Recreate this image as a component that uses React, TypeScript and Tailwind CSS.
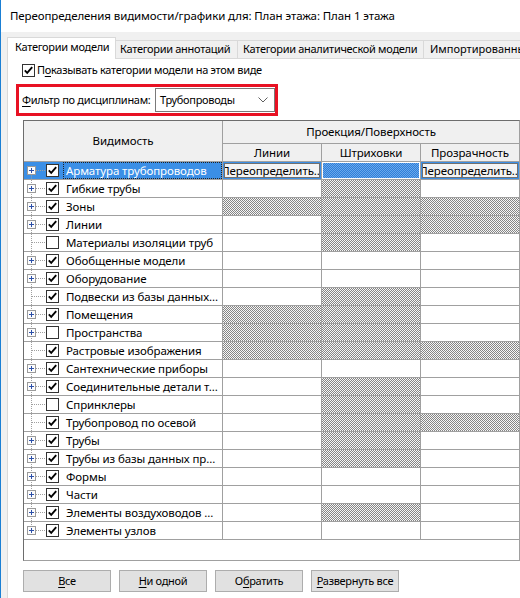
import React from "react"

type Cell = "w" | "h" | "btn" | "sel"

type Row = {
  name: string
  plus: boolean
  checked: boolean
  l: Cell
  s: Cell
  t: Cell
}

const rows: Row[] = [
  { name: "Арматура трубопроводов", plus: true, checked: true, l: "btn", s: "sel", t: "btn" },
  { name: "Гибкие трубы", plus: true, checked: true, l: "w", s: "h", t: "w" },
  { name: "Зоны", plus: true, checked: true, l: "h", s: "h", t: "h" },
  { name: "Линии", plus: true, checked: true, l: "w", s: "h", t: "h" },
  { name: "Материалы изоляции труб", plus: false, checked: false, l: "w", s: "h", t: "w" },
  { name: "Обобщенные модели", plus: true, checked: true, l: "w", s: "w", t: "w" },
  { name: "Оборудование", plus: true, checked: true, l: "w", s: "w", t: "w" },
  { name: "Подвески из базы данных...", plus: false, checked: true, l: "w", s: "h", t: "w" },
  { name: "Помещения", plus: true, checked: true, l: "h", s: "h", t: "w" },
  { name: "Пространства", plus: true, checked: false, l: "h", s: "h", t: "w" },
  { name: "Растровые изображения", plus: false, checked: true, l: "h", s: "h", t: "h" },
  { name: "Сантехнические приборы", plus: true, checked: true, l: "w", s: "w", t: "w" },
  { name: "Соединительные детали т...", plus: true, checked: true, l: "w", s: "h", t: "w" },
  { name: "Спринклеры", plus: false, checked: false, l: "w", s: "h", t: "w" },
  { name: "Трубопровод по осевой", plus: false, checked: true, l: "w", s: "h", t: "h" },
  { name: "Трубы", plus: true, checked: true, l: "w", s: "h", t: "w" },
  { name: "Трубы из базы данных пр...", plus: true, checked: true, l: "w", s: "h", t: "w" },
  { name: "Формы", plus: true, checked: true, l: "w", s: "w", t: "w" },
  { name: "Части", plus: true, checked: true, l: "w", s: "w", t: "w" },
  { name: "Элементы воздуховодов ...", plus: true, checked: true, l: "w", s: "h", t: "w" },
  { name: "Элементы узлов", plus: true, checked: true, l: "w", s: "w", t: "w" },
]

const hatch =
  "[background-image:repeating-conic-gradient(#858585_0_25%,#f6f6f6_0_50%)] [background-size:2px_2px]"
const blueHatch =
  "[background-image:repeating-conic-gradient(#2f7fd8_0_25%,#6aa8ec_0_50%)] [background-size:2px_2px]"

// dialog controls render a bit narrower than the grid text
const ctl = "text-[11px] tracking-[-0.3px]"

function CheckBox({ checked }: { checked: boolean }) {
  return (
    <div className="w-[13px] h-[13px] border border-[#333333] bg-white flex items-center justify-center shrink-0">
      {checked && (
        <svg width="11" height="11" viewBox="0 0 11 11">
          <path d="M1.8 5.4 L4.2 7.8 L9.2 2.2" fill="none" stroke="#000" strokeWidth="1.9" />
        </svg>
      )}
    </div>
  )
}

function Tree({ plus, first, last }: { plus: boolean; first: boolean; last: boolean }) {
  return (
    <svg width="22" height="17" viewBox="0 0 22 17" className="shrink-0">
      <line
        x1="7.5"
        y1={first ? 8.5 : 0}
        x2="7.5"
        y2={last ? 8.5 : 17}
        stroke="#a0a0a0"
        strokeDasharray="1 1"
      />
      <line x1="8" y1="8.5" x2="22" y2="8.5" stroke="#a0a0a0" strokeDasharray="1 1" />
      {plus && (
        <g>
          <rect x="3.5" y="4.5" width="8" height="8" fill="#fcfcfc" stroke="#9a9a9a" />
          <line x1="5" y1="8.5" x2="10" y2="8.5" stroke="#2b4fa8" />
          <line x1="7.5" y1="6" x2="7.5" y2="11" stroke="#2b4fa8" />
        </g>
      )}
    </svg>
  )
}

function Ul({ children }: { children: React.ReactNode }) {
  return <span className="underline underline-offset-2">{children}</span>
}

function DataCell({ kind, last }: { kind: Cell; last?: boolean }) {
  const w = last ? "w-[98px]" : "w-[99px] border-r border-[#a0a0a0]"
  if (kind === "h") return <div className={`${w} h-full ${hatch}`} />
  if (kind === "sel")
    return (
      <div className={`${w} h-full bg-white p-px`}>
        <div className={`h-full ${blueHatch}`} />
      </div>
    )
  if (kind === "btn")
    return (
      <div className={`${w} h-full bg-[#3b8fe6] p-px`}>
        <div className="h-full bg-[#f4f4f4] border border-[#707070] flex justify-center items-center overflow-hidden leading-none">
          <span>Переопределить...</span>
        </div>
      </div>
    )
  return <div className={`${w} h-full`} />
}

function Btn({ children }: { children: React.ReactNode }) {
  return (
    <div className={`w-[88px] h-[22px] bg-[#e1e1e1] border border-[#adadad] flex items-center justify-center ${ctl}`}>
      <span>{children}</span>
    </div>
  )
}

export default function App() {
  return (
    <div
      className="w-[520px] h-[598px] overflow-hidden bg-white border-l border-[#1a7fd4] flex flex-col text-[11.5px] tracking-[-0.1px] text-black whitespace-nowrap"
      style={{ fontFamily: "'Noto Sans', 'DejaVu Sans', sans-serif" }}
    >
      <div className="h-[32px] shrink-0 flex items-center pl-[9px]">
        Переопределения видимости/графики для: План этажа: План 1 этажа
      </div>

      <div className="flex-1 bg-[#f0f0f0] pl-[6px] pt-[5px] flex flex-col">
        <div className={`flex items-end shrink-0 ${ctl}`}>
          <div className="shrink-0 relative z-10 -mb-px h-[22px] w-[109px] bg-white border border-b-0 border-[#d9d9d9] flex items-center pl-[7px] pb-[2px]">
            Категории модели
          </div>
          <div className="shrink-0 h-[18px] w-[122px] border-t border-r border-[#d9d9d9] flex items-center pl-[4px]">
            Категории аннотаций
          </div>
          <div className="shrink-0 h-[18px] w-[186px] border-t border-r border-[#d9d9d9] flex items-center pl-[5px]">
            Категории аналитической модели
          </div>
          <div className="shrink-0 h-[18px] w-[160px] border-t border-r border-[#d9d9d9] flex items-center pl-[6px] tracking-[0px]">
            Импортированные категории
          </div>
        </div>

        <div className="flex-1 bg-white border-t border-l border-[#d9d9d9] flex flex-col">
          <div className={`mt-[5px] h-[13px] flex items-center pl-[14px] ${ctl}`}>
            <CheckBox checked />
            <span className="ml-[2px]">
              П<Ul>о</Ul>казывать категории модели на этом виде
            </span>
          </div>

          <div className={`mt-[7px] ml-[8px] w-[262px] h-[32px] border-[3px] border-[#e81123] flex items-center pl-[3px] ${ctl}`}>
            <div className="w-[133px]">
              <Ul>Ф</Ul>ильтр по дисциплинам:
            </div>
            <div className="w-[120px] h-[24px] border border-[#7a7a7a] bg-white flex items-center justify-between pl-[4px] pr-[6px]">
              <span>Трубопроводы</span>
              <svg width="10" height="6" viewBox="0 0 10 6">
                <path d="M0.5 0.5 L5 5 L9.5 0.5" fill="none" stroke="#606060" />
              </svg>
            </div>
          </div>

          <div className="mt-[4px] ml-[15px] w-[497px] h-[441px] border border-[#a0a0a0] border-l-[#6d6d6d] border-t-[#6d6d6d] bg-white flex flex-col">
            <div className="flex h-[41px] shrink-0 bg-[#f0f0f0]">
              <div className="w-[199px] h-full border-r border-b border-[#a0a0a0] flex items-center justify-center">
                Видимость
              </div>
              <div className="w-[296px] flex flex-col">
                <div className="h-[23px] border-b border-[#a0a0a0] flex items-center justify-center">
                  Проекция/Поверхность
                </div>
                <div className="h-[18px] flex border-b border-[#a0a0a0]">
                  <div className="w-[99px] border-r border-[#a0a0a0] flex items-center justify-center">Линии</div>
                  <div className="w-[99px] border-r border-[#a0a0a0] flex items-center justify-center">Штриховки</div>
                  <div className="w-[98px] flex items-center justify-center">Прозрачность</div>
                </div>
              </div>
            </div>

            {rows.map((r, i) => {
              const selected = i === 0
              return (
                <div key={r.name} className="flex h-[18px] shrink-0 border-b border-[#a0a0a0]">
                  <div
                    className={`w-[199px] h-full border-r border-[#a0a0a0] flex items-center ${
                      selected ? "bg-[#3b8fe6] text-white" : ""
                    }`}
                  >
                    <Tree plus={r.plus} first={i === 0} last={i === rows.length - 1} />
                    <CheckBox checked={r.checked} />
                    {selected ? (
                      <span className="ml-[4px] flex-1 h-full border border-dotted border-[#222] pl-[2px] flex items-center">
                        {r.name}
                      </span>
                    ) : (
                      <span className="ml-[7px]">{r.name}</span>
                    )}
                  </div>
                  <DataCell kind={r.l} />
                  <DataCell kind={r.s} />
                  <DataCell kind={r.t} last />
                </div>
              )
            })}
          </div>

          <div className="mt-[9px] ml-[15px] flex gap-[8px]">
            <Btn>
              <Ul>В</Ul>се
            </Btn>
            <Btn>
              <Ul>Н</Ul>и одной
            </Btn>
            <Btn>
              О<Ul>б</Ul>ратить
            </Btn>
            <Btn>
              <Ul>Р</Ul>азвернуть все
            </Btn>
          </div>
        </div>
      </div>
    </div>
  )
}
